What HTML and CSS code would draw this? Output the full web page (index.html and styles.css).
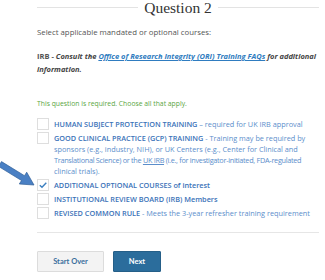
FILE: index.html
```html
<!DOCTYPE html>
<html lang="en">
  <head>
    <meta charset="UTF-8" />
    <meta name="viewport" content="width=device-width, initial-scale=1.0" />
    <title>Question 2</title>
    <link rel="stylesheet" href="styles.css">
  </head>
  <body>
    <div class="survey">
      <div class="q_title">
        <span class="q_line"></span>
        <h2>Question 2</h2>
        <span class="q_line"></span>
      </div>

      <p class="q_text">Select applicable mandated or optional courses:</p>

      <p class="q_note">IRB - <em>Consult the <a href="#">Office of Research Integrity (ORI) Training FAQs</a> for additional information.</em></p>

      <p class="q_required">This question is required. Choose all that apply.</p>

      <div class="choice_list">
        <label class="choice">
          <span class="box"></span>
          <span class="choice_text"><b>HUMAN SUBJECT PROTECTION TRAINING</b> &ndash; required for UK IRB approval</span>
        </label>
        <label class="choice">
          <span class="box"></span>
          <span class="choice_text"><b>GOOD CLINICAL PRACTICE (GCP) TRAINING</b> - Training may be required by sponsors (e.g., industry, NIH), or UK Centers (e.g., Center for Clinical and <span class="tight">Translational Science) or the <u>UK IRB</u> (i.e., for investigator-initiated, FDA&#8209;regulated</span> clinical trials).</span>
        </label>
        <label class="choice">
          <span class="box checked">
            <svg width="10" height="10" viewBox="0 0 10 10"><path d="M1.8 5.2 L4 7.3 L8.3 2.8" fill="none" stroke="#3c7fc0" stroke-width="1.4"/></svg>
          </span>
          <span class="choice_text"><b>ADDITIONAL OPTIONAL COURSES of interest</b></span>
        </label>
        <label class="choice">
          <span class="box"></span>
          <span class="choice_text"><b>INSTITUTIONAL REVIEW BOARD (IRB) Members</b></span>
        </label>
        <label class="choice">
          <span class="box"></span>
          <span class="choice_text"><b>REVISED COMMON RULE</b> - Meets the 3-year refresher training requirement</span>
        </label>
      </div>

      <div class="buttons">
        <button class="btn btn_start">Start Over</button>
        <button class="btn btn_next">Next</button>
      </div>
    </div>

    <svg class="pointer" width="40" height="30" viewBox="0 0 40 30">
      <polygon points="1.5,0.6 24.5,14.7 26.7,11.2 34,24 19.3,23 21.5,19.5 -1.5,5.4" fill="#4a80c4" stroke="#2f5e98" stroke-width="0.7"/>
    </svg>
  </body>
</html>
```

FILE: styles.css
```css
body {
  margin: 0;
  background: #fff;
  font-family: "Open Sans", sans-serif;
  color: #555;
}

.survey {
  padding: 0 6px 0 37px;
}

.q_title {
  display: flex;
  align-items: center;
  gap: 6px;
  height: 15px;
}
.q_title h2 {
  margin: 0;
  font-family: "Liberation Serif", serif;
  font-weight: normal;
  font-size: 15.5px;
  color: #333;
  line-height: 15px;
}
.q_line {
  flex: 1;
  height: 1px;
  background: #e3e3e3;
}

.q_text {
  margin: 11px 0 0;
  font-size: 7.8px;
  line-height: 12px;
}

.q_note {
  margin: 12px 0 0;
  font-size: 7.5px;
  line-height: 13px;
  font-weight: bold;
}
.q_note em {
  color: #444;
}
.q_note a {
  color: #2f7cc0;
}

.q_required {
  margin: 22px 0 0;
  font-size: 6.8px;
  line-height: 12px;
  color: #5aa63f;
}

.choice_list {
  margin: 8px -5px 0 0;
}
.choice {
  display: flex;
  align-items: flex-start;
  gap: 5px;
  margin-bottom: 2px;
  font-size: 7.3px;
  line-height: 11px;
  color: #5b8ecb;
}
.choice b {
  color: #3a72b8;
  font-weight: 600;
}
.tight {
  letter-spacing: -0.3px;
}
.box {
  flex: none;
  width: 10px;
  height: 10px;
  border: 1px solid #dedede;
  background: #fff;
  display: flex;
  align-items: center;
  justify-content: center;
}
.choice_text {
  padding-top: 1px;
}

.buttons {
  margin-top: 13px;
  border-top: 1px solid #e6e6e6;
  padding-top: 18px;
  display: flex;
  gap: 9px;
}
.btn {
  font-family: "Lato", sans-serif;
  font-weight: bold;
  font-size: 7.5px;
  height: 21px;
  border-radius: 1px;
}
.btn_start {
  width: 67px;
  background: #f3f3f3;
  border: 1px solid #dcdcdc;
  color: #3b6f9d;
}
.btn_next {
  width: 48px;
  background: #2b6d9c;
  border: 1px solid #255f88;
  color: #fff;
}

.pointer {
  position: absolute;
  left: 0;
  top: 161px;
}
```
